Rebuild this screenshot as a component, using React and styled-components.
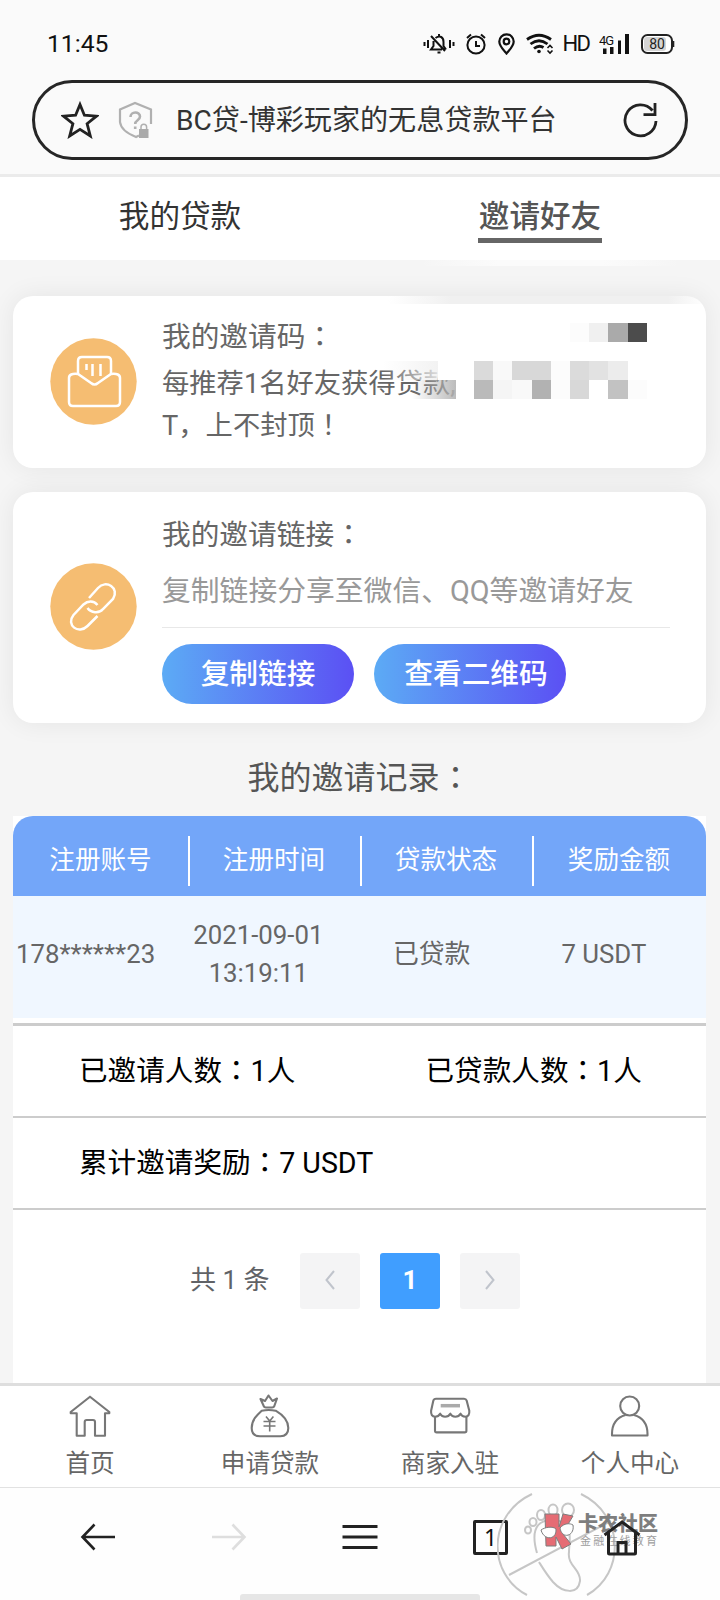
import React from "react";
import styled, { createGlobalStyle } from "styled-components";

const GlobalStyle = createGlobalStyle`
  * {
    box-sizing: border-box;
  }

  body {
    margin: 0;
    background: #f5f5f5;
    font-family: Roboto, "Noto Sans CJK SC", sans-serif;
    color: #333;
  }
`;

const mosaicTop = ["#fcfcfc", "#f0f0f0", "#aaaaaa", "#4c4c4c"];
const mosaicBottom = [
  "#dadada", "#f9f9f9", "#d8d8d8", "#d8d8d8", "#fcfcfc", "#dbdbdb", "#e2e2e2", "#ececec", "#ffffff",
  "#bababa", "#f5f5f5", "#f9f9f9", "#b2b2b2", "#fcfcfc", "#d8d8d8", "#ffffff", "#c2c2c2", "#fcfcfc",
];

const columns = ["注册账号", "注册时间", "贷款状态", "奖励金额"];

const StatusBar = () => (
  <Status>
    <Clock>11:45</Clock>
    <StatusIcons>
      <svg width="32" height="22" viewBox="0 0 32 22" fill="none" stroke="#111" strokeWidth="2">
        <path d="M1.5 9v4M5 7v8M27 7v8M30.5 9v4M8 3l14 15M12.500 5C17 2 20.500 4 20.500 9v4l2.500 3.500M10.500 8v5L8 16.500h11M16 1v2M14.500 19.500h3" />
      </svg>
      <svg width="22" height="22" viewBox="1.500 0 22 22" fill="none" stroke="#111" strokeWidth="2">
        <circle cx="11.500" cy="12" r="8.600" />
        <path d="M2.500 5l4-3.500M20.500 5l-4-3.500M11.500 8v5h4" />
      </svg>
      <svg width="18" height="22" viewBox="1 0 18 22" fill="none" stroke="#111" strokeWidth="2.200">
        <path d="M9.500 20.500C6 16.500 2.300 13 2.300 8.500a7.200 7.200 0 0 1 14.400 0C16.700 13 13 16.500 9.500 20.500z" />
        <circle cx="9.500" cy="8.500" r="2.800" />
      </svg>
      <svg width="28" height="22" viewBox="0 0 28 22" fill="none" stroke="#111" strokeWidth="2.800">
        <path d="M1 6.500Q13 -2 25 6.500M4.500 11Q13 4.500 21.500 11M8 15.500q5-4 9.500-1" />
        <circle cx="13" cy="18.500" r="1.800" fill="#111" stroke="none" />
        <path d="M21.500 15l2.500-2.500 2.500 2.500M21.500 17.500l2.500 2.500 2.500-2.500" strokeWidth="1.600" />
      </svg>
      <Hd>HD</Hd>
      <svg width="32" height="22" viewBox="0 0 32 22" fill="#111">
        <text x="0" y="11.500" fontSize="13" fontFamily="Roboto" fontWeight="400" textLength="15">4G</text>
        <path d="M4 15.500h3.500V21H4zM11 14h3.500v7H11zM19 7.500h3V21h-3zM26 1h4v20h-4z" />
      </svg>
      <svg width="34" height="22" viewBox="0 0 34 22">
        <rect x="1" y="2" width="30" height="18" rx="5.500" fill="#fff" stroke="#222" strokeWidth="2" />
        <rect x="3" y="4" width="22" height="14" rx="3" fill="#d5d5d5" />
        <path d="M32.300 8v6" stroke="#222" strokeWidth="2" />
        <text x="16" y="16" fontSize="14" fontFamily="Roboto" textAnchor="middle" fill="#222">80</text>
      </svg>
    </StatusIcons>
  </Status>
);

const AddressBar = () => (
  <Address>
    <StarIcon width="38" height="38" viewBox="0 0 38 38" fill="none" stroke="#222" strokeWidth="2.800">
      <path d="M19 3.500l4.400 10.700 12.100.900-9.400 7.600 3.200 12.300L19 28.400 8.700 35l3.200-12.300-9.400-7.600 12.100-.900z" />
    </StarIcon>
    <ShieldIcon width="36" height="38" viewBox="0 0 36 38" fill="none" stroke="#b0b0b0" strokeWidth="2.200">
      <path d="M22 34.500l-3 1.500c-5-2-15-6-16-15V8.500L18 2l16 6.500V23" />
      <path d="M13.500 16c0-6 9.500-6 9.500-.500 0 4-4.800 3.500-4.800 7.500M18.200 25.500v2.500" strokeWidth="2.600" />
      <path d="M22 28h9.500v9H22z" fill="#aaa" stroke="none" />
      <path d="M24 28v-2a2.800 2.800 0 0 1 5.600 0v2" strokeWidth="1.500" />
    </ShieldIcon>
    <AddressText>BC贷-博彩玩家的无息贷款平台</AddressText>
    <svg width="38" height="38" viewBox="0 0 38 38" fill="none" stroke="#222" strokeWidth="2.800">
      <path d="M35 20A15.500 15.500 0 1 1 31.500 9.500M22.500 13.700H34V2" />
    </svg>
  </Address>
);

const MailIcon = () => (
  <CircleSvg width="87" height="87" viewBox="0 0 87 87" fill="none" stroke="#fff" strokeWidth="2.500">
    <circle cx="43.500" cy="43.500" r="43.200" fill="#f5bd72" stroke="none" />
    <path d="M28 36V23q0-4 4-4h25q4 0 4 4v13" />
    <path d="M28 36q-9-1-9 4v24q0 4 4 4h43q4 0 4-4V40q0-5-9-4L48 45q-3.500 3-7 0z" />
    <path d="M36.500 26v6M42.500 26v12M50.500 26v12" strokeWidth="2.500" />
  </CircleSvg>
);

const LinkIcon = () => (
  <CircleSvg width="87" height="87" viewBox="0 0 87 87" fill="none" stroke="#fff" strokeWidth="2.500">
    <circle cx="43.500" cy="43.500" r="43.200" fill="#f5bd72" stroke="none" />
    <path d="M39 35l9-10c8-9 22 0 15 11L53 46c-4 5-12 4-15.500-1" />
    <path d="M47.500 42c-4-5-10-4-14-.5L23.500 52c-8 10 5 20 14 11L47.500 53" />
  </CircleSvg>
);

const HomeIcon = () => (
  <TabSvg width="44" height="44" viewBox="0 0 44 44">
    <path d="M22 2.700L2.700 18v1.300h6v22.400h8V28q0-2 2-2H25q2 0 2 2v13.700h10V19.300h4.300V18z" />
  </TabSvg>
);

const BagIcon = () => (
  <TabSvg width="44" height="44" viewBox="0 0 44 44">
    <path d="M12.500 5l4.500 2 3.500-5.500L24.500 7l4.500-2.500-2.500 7q-.5 2-2.500 2h-6q-2 0-2.500-2z" />
    <path d="M13.700 16.700q7-1.500 14 0C35 21 40.300 26 40.300 34q0 8-8 8.300H12Q3.700 42 3.700 34C3.700 26 9 21 13.700 16.700z" />
    <path d="M18 22.500l3.700 4.500 3.700-4.500M15.500 27.500h12M15.500 32h12M21.700 27v10.500" strokeWidth="1.600" />
  </TabSvg>
);

const ShopIcon = () => (
  <TabSvg width="44" height="44" viewBox="0 0 44 44">
    <path d="M8 4.700h28q2 0 2.700 2l2.600 10q.5 6-4 6-3.500 0-4.800-3-1.500 3-5.200 3t-5-3q-1.500 3-5.200 3t-5-3q-1.500 3-5 3-4.500 0-4-6l2.200-10q.6-2 2.700-2z" />
    <path d="M7 22.700v14q0 1.700 1.700 1.700h28q1.700 0 1.700-1.700v-14" />
    <path d="M12.700 11.700H32" strokeWidth="3.500" stroke="#aaa" />
  </TabSvg>
);

const PersonIcon = () => (
  <TabSvg width="44" height="44" viewBox="0 0 44 44">
    <circle cx="21.700" cy="12" r="9.500" />
    <path d="M17.500 21C9 23.500 4 30 4 40v1.500h35.500V40c0-10-5-16.500-13.500-19" />
  </TabSvg>
);

const Watermark = () => (
  <WatermarkSvg width="170" height="104" viewBox="0 0 170 104" fill="none" stroke="#c4c4c4" strokeWidth="2">
    <path d="M35 1C-10 22 -10 81 30 102M84 1c44 21 44 80 6 101M12 82l102-54" />
    <path d="M40 60C32 32 44 26 58 27c20 3 14 20 14 32-2 14 12 17 11 29-2 14-17 12-27 1-6-7-9-12-14-20" />
    <ellipse cx="31" cy="37" rx="3" ry="3.500" />
    <ellipse cx="36" cy="29" rx="3.500" ry="4" />
    <ellipse cx="44" cy="22" rx="4" ry="5" />
    <ellipse cx="56" cy="17" rx="4.500" ry="5.500" />
    <ellipse cx="71" cy="17" rx="6" ry="6.500" />
    <path d="M48 21h14v13l4-13 10 2-9 15-1 3 8 10-9 5-6-12v9H49z" fill="#e4656d" stroke="#777" strokeWidth="1" />
    <path d="M44 37c4-3 12-4 15-1 1 11-12 12-15 1zM63 35c4-5 10-5 13-3 2 11-11 15-13 3z" fill="#fff" stroke="#777" strokeWidth="1" />
    <text x="81" y="37.500" fontSize="20" fontWeight="900" fontFamily="Noto Sans CJK SC" fill="#787878" stroke="none">卡农社区</text>
    <text x="83" y="51.500" fontSize="11" letterSpacing="2.200" fontFamily="Noto Sans CJK SC" fill="#999" stroke="none">金融在线教育</text>
  </WatermarkSvg>
);

export default function App() {
  return (
    <Page>
      <GlobalStyle />
      <Header>
        <StatusBar />
        <AddressBar />
      </Header>

      <Tabs>
        <Tab>我的贷款</Tab>
        <Tab $active>
          <span>邀请好友</span>
        </Tab>
        <TabsGlow />
      </Tabs>

      <Content>
        <Card $height={172}>
          <MailIcon />
          <CardBody>
            <CardTitle>我的邀请码<Wide>：</Wide></CardTitle>
            <CardText>
              每推荐1名好友获得贷款,
              <br />
              T，上不封顶<Wide>！</Wide>
            </CardText>
          </CardBody>
          <CardEdge />
          <TextFade />
          <Mosaic $left={557} $top={27} $cols={4}>
            {mosaicTop.map((color, i) => <Pixel key={i} $color={color} />)}
          </Mosaic>
          <Mosaic $left={461} $top={65} $cols={9}>
            {mosaicBottom.map((color, i) => <Pixel key={i} $color={color} />)}
          </Mosaic>
        </Card>

        <Card $height={231}>
          <LinkIcon />
          <CardBody>
            <LinkTitle>我的邀请链接<Wide>：</Wide></LinkTitle>
            <LinkHint>复制链接分享至微信、QQ等邀请好友</LinkHint>
            <Buttons>
              <Button>复制链接</Button>
              <Button $indent={12}>查看二维码</Button>
            </Buttons>
          </CardBody>
        </Card>

        <RecordTitle>我的邀请记录<Wide>：</Wide></RecordTitle>

        <Panel>
          <TableHead>
            {columns.map((name) => <HeadCell key={name}>{name}</HeadCell>)}
          </TableHead>
          <TableRow>
            <Cell $start>178******23</Cell>
            <Cell>2021-09-01<br />13:19:11</Cell>
            <Cell>已贷款</Cell>
            <Cell>7 USDT</Cell>
          </TableRow>
          <Summary $first>
            <span>已邀请人数<Wide>：</Wide>1人</span>
            <span>已贷款人数<Wide>：</Wide>1人</span>
          </Summary>
          <Summary>
            <span>累计邀请奖励<Wide>：</Wide>7 USDT</span>
          </Summary>
          <Pagination>
            <Total>共 1 条</Total>
            <PageButton>
              <svg width="12" height="20" viewBox="0 0 12 20" fill="none" stroke="#c0c4cc" strokeWidth="2">
                <path d="M10 1L2.500 10l7.500 9" />
              </svg>
            </PageButton>
            <PageButton $active>1</PageButton>
            <PageButton>
              <svg width="12" height="20" viewBox="0 0 12 20" fill="none" stroke="#c0c4cc" strokeWidth="2">
                <path d="M2 1l7.500 9L2 19" />
              </svg>
            </PageButton>
          </Pagination>
        </Panel>
      </Content>

      <TabBar>
        <TabItem><HomeIcon />首页</TabItem>
        <TabItem><BagIcon />申请贷款</TabItem>
        <TabItem><ShopIcon />商家入驻</TabItem>
        <TabItem><PersonIcon />个人中心</TabItem>
      </TabBar>

      <BrowserNav>
        <Watermark />
        <svg width="36" height="28" viewBox="0 0 36 28" fill="none" stroke="#222" strokeWidth="2.600">
          <path d="M35 14H3M14.500 1.500L2.500 14l12 12.500" />
        </svg>
        <svg width="36" height="28" viewBox="0 0 36 28" fill="none" stroke="#dedede" strokeWidth="2.600">
          <path d="M1 14h32M21.500 1.500l12 12.500-12 12.500" />
        </svg>
        <svg width="36" height="28" viewBox="0 0 36 28" fill="none" stroke="#222" strokeWidth="3">
          <path d="M.5 3.500h35M.5 14h35M.5 24.500h35" />
        </svg>
        <PageCount>1</PageCount>
        <svg width="38" height="38" viewBox="0 0 38 38" fill="none" stroke="#222" strokeWidth="3">
          <path d="M1.500 17L19 4l17.500 13M5.500 15v20q0 1 1 1h25q1 0 1-1V15M15 36V24.500h8V36" />
        </svg>
        <HomePill />
      </BrowserNav>
    </Page>
  );
}

const Page = styled.div`
  display: flex;
  flex-direction: column;
  width: 720px;
  height: 1600px;
  overflow: hidden;
`;

const Header = styled.header`
  height: 177px;
  padding: 0 32px;
  background: #fafafa;
  border-bottom: 3px solid #ebebeb;
`;

const Status = styled.div`
  display: flex;
  justify-content: space-between;
  align-items: center;
  height: 80px;
  padding: 7px 13px 0 15px;
`;

const Clock = styled.div`
  font-size: 24.7px;
  color: #111;
`;

const StatusIcons = styled.div`
  display: flex;
  align-items: center;
  gap: 10.3px;
`;

const Hd = styled.span`
  font-size: 22px;
  line-height: 22px;
  width: 26px;
  margin-left: -2px;
  letter-spacing: -1.5px;
  color: #111;
`;

const Address = styled.div`
  display: flex;
  align-items: center;
  height: 80px;
  padding: 0 26px 0 26px;
  border: 3px solid #262626;
  border-radius: 40px;
`;

const StarIcon = styled.svg`
  margin-right: 18px;
`;

const ShieldIcon = styled.svg`
  margin-right: 23px;
`;

const AddressText = styled.div`
  flex: 1;
  padding-bottom: 5px;
  font-size: 28.1px;
  white-space: nowrap;
`;

const Tabs = styled.nav`
  position: relative;
  display: flex;
  height: 83px;
  background: #fff;
`;

const Tab = styled.div`
  flex: 1;
  display: flex;
  justify-content: center;
  align-items: flex-start;
  padding-top: 15px;
  font-size: 30.6px;
  line-height: 49px;
  font-weight: ${(props) => (props.$active ? 500 : 400)};
  color: ${(props) => (props.$active ? "#555" : "#333")};

  span {
    height: 51px;
    padding: 0 0.5px;
    border-bottom: 5px solid #666;
  }
`;

const TabsGlow = styled.div`
  position: absolute;
  left: 420px;
  top: 83px;
  width: 260px;
  height: 6px;
  background: linear-gradient(90deg, transparent, #fbfbfb 30%, #fbfbfb 70%, transparent);
`;

const Content = styled.main`
  flex: 1;
  display: flex;
  flex-direction: column;
  padding: 36px 14px 0 13px;
`;

const Card = styled.section`
  position: relative;
  flex: none;
  display: flex;
  align-items: center;
  height: ${(props) => props.$height}px;
  margin-bottom: 24px;
  padding: 0 36px 0 37px;
  background: #fff;
  border-radius: 20px;
  box-shadow: 0 0 26px rgba(0, 0, 0, 0.07);
`;

const CircleSvg = styled.svg`
  flex: none;
  margin-bottom: 2px;
`;

const CardBody = styled.div`
  flex: 1;
  align-self: stretch;
  padding: 20px 0 0 25px;
  color: #666;
`;

// full-width punctuation centred in its box
const Wide = styled.span`
  font-family: "Noto Sans CJK TC", sans-serif;
  line-height: 0;
`;

const CardTitle = styled.div`
  font-size: 28.7px;
  line-height: 42px;
`;

const CardText = styled.div`
  padding-top: 5px;
  font-size: 27.3px;
  line-height: 42px;
`;

const CardEdge = styled.div`
  position: absolute;
  left: 375px;
  right: 0;
  top: 0;
  height: 8px;
  background: linear-gradient(90deg, transparent, #f0f0f0 20%, #f0f0f0 88%, transparent);
`;

const TextFade = styled.div`
  position: absolute;
  left: 370px;
  top: 65px;
  width: 73px;
  height: 38px;
  background:
    linear-gradient(90deg, transparent 40%, rgba(180, 180, 180, 0.9)) 0 19px / 73px 19px no-repeat,
    linear-gradient(90deg, transparent, rgba(240, 240, 240, 0.85) 75%, #fff 76%) 0 0 / 73px 19px no-repeat;
`;

const Mosaic = styled.div`
  position: absolute;
  left: ${(props) => props.$left}px;
  top: ${(props) => props.$top}px;
  display: grid;
  grid-template-columns: repeat(${(props) => props.$cols}, 19.2px);
  grid-auto-rows: 19px;
`;

const Pixel = styled.i`
  background: ${(props) => props.$color};
`;

const LinkTitle = styled.div`
  padding-top: 3px;
  font-size: 28.7px;
  line-height: 40px;
`;

const LinkHint = styled.div`
  height: 73px;
  border-bottom: 1px solid #e8e8e8;
  font-size: 28.8px;
  line-height: 72px;
  color: #999;
  white-space: nowrap;
`;

const Buttons = styled.div`
  display: flex;
  gap: 20px;
  margin-top: 16px;
`;

const Button = styled.button`
  width: 192px;
  height: 60px;
  padding: 0 0 6px ${(props) => props.$indent || 0}px;
  border: none;
  border-radius: 30px;
  background: linear-gradient(90deg, #5cabf5, #5b50f4);
  color: #fff;
  font-family: inherit;
  font-size: 28.7px;
  font-weight: 500;
  white-space: nowrap;
`;

const RecordTitle = styled.h2`
  margin: 8px 0 14px;
  font-size: 32px;
  font-weight: 400;
  line-height: 47px;
  text-align: center;
  color: #555;
`;

const Panel = styled.section`
  flex: 1;
  background: #fff;
`;

const TableHead = styled.div`
  display: grid;
  grid-template-columns: 177px 172px 172px 1fr;
  align-items: center;
  height: 80px;
  padding-top: 10px;
  background: #73a6f9;
  border-radius: 20px 20px 0 0;
`;

const HeadCell = styled.div`
  height: 50px;
  padding-right: 2px;
  border-right: 2px solid #fff;
  font-size: 25.6px;
  line-height: 49px;
  text-align: center;
  color: #fff;

  &:first-child {
    padding-right: 0;
  }

  &:last-child {
    border-right: none;
  }
`;

const TableRow = styled.div`
  display: grid;
  grid-template-columns: repeat(4, 1fr);
  align-items: center;
  height: 122px;
  margin-bottom: 5px;
  padding-bottom: 6px;
  background: #f0f7ff;
`;

const Cell = styled.div`
  padding-left: ${(props) => (props.$start ? "3px" : 0)};
  padding-right: ${(props) => (props.$start ? 0 : "29px")};
  font-size: 25.8px;
  line-height: 38px;
  text-align: ${(props) => (props.$start ? "left" : "center")};
  color: #666;

  &:last-child {
    padding-right: 31px;
  }
`;

const Summary = styled.div`
  display: grid;
  grid-template-columns: 1fr 1fr;
  height: ${(props) => (props.$first ? 95 : 92)}px;
  border-top: ${(props) => (props.$first ? "3px" : 0)} solid #ccc;
  border-bottom: 2px solid #ccc;
  font-size: 28.6px;
  line-height: 90px;
  color: #000;

  > span {
    padding-left: 66px;
    white-space: nowrap;
  }
`;

const Pagination = styled.div`
  display: flex;
  align-items: center;
  gap: 20px;
  padding: 43px 0 0 177px;
`;

const Total = styled.span`
  width: 90px;
  padding-bottom: 7px;
  font-size: 26px;
  white-space: nowrap;
  color: #606266;
`;

const PageButton = styled.button`
  display: flex;
  justify-content: center;
  align-items: center;
  width: 60px;
  height: 56px;
  padding: 0 0 3px;
  border: none;
  border-radius: 3px;
  background: ${(props) => (props.$active ? "#409eff" : "#f4f4f5")};
  color: #fff;
  font-family: inherit;
  font-size: 26px;
  font-weight: 700;
`;

const TabBar = styled.nav`
  flex: none;
  display: flex;
  height: 104px;
  padding-top: 8px;
  background: #fff;
  border-top: 3px solid #dedede;
`;

const TabItem = styled.div`
  flex: 1;
  display: flex;
  flex-direction: column;
  align-items: center;
  font-size: 24.6px;
  line-height: 52px;
  color: #666;
`;

const TabSvg = styled.svg`
  flex: none;
  fill: none;
  stroke: #777;
  stroke-width: 2.1px;
  stroke-linejoin: round;
`;

const BrowserNav = styled.footer`
  position: relative;
  flex: none;
  display: grid;
  grid-template-columns: repeat(5, 131px);
  justify-items: center;
  align-items: center;
  height: 113px;
  padding: 0 0 14px 32px;
  background: #fefefe;
  border-top: 1px solid #e2e2e2;

  > svg {
    z-index: 1;
  }
`;

const PageCount = styled.div`
  width: 35px;
  height: 35px;
  border: 3px solid #222;
  border-radius: 2px;
  font-family: "Noto Sans", sans-serif;
  font-size: 23px;
  line-height: 29px;
  text-align: center;
  color: #111;
`;

const WatermarkSvg = styled.svg`
  position: absolute;
  left: 497px;
  top: 5px;
  pointer-events: none;
  opacity: 0.95;
`;

const HomePill = styled.div`
  position: absolute;
  left: 240px;
  bottom: 0;
  width: 240px;
  height: 6px;
  border-radius: 3px 3px 0 0;
  background: #e6e6e6;
`;
